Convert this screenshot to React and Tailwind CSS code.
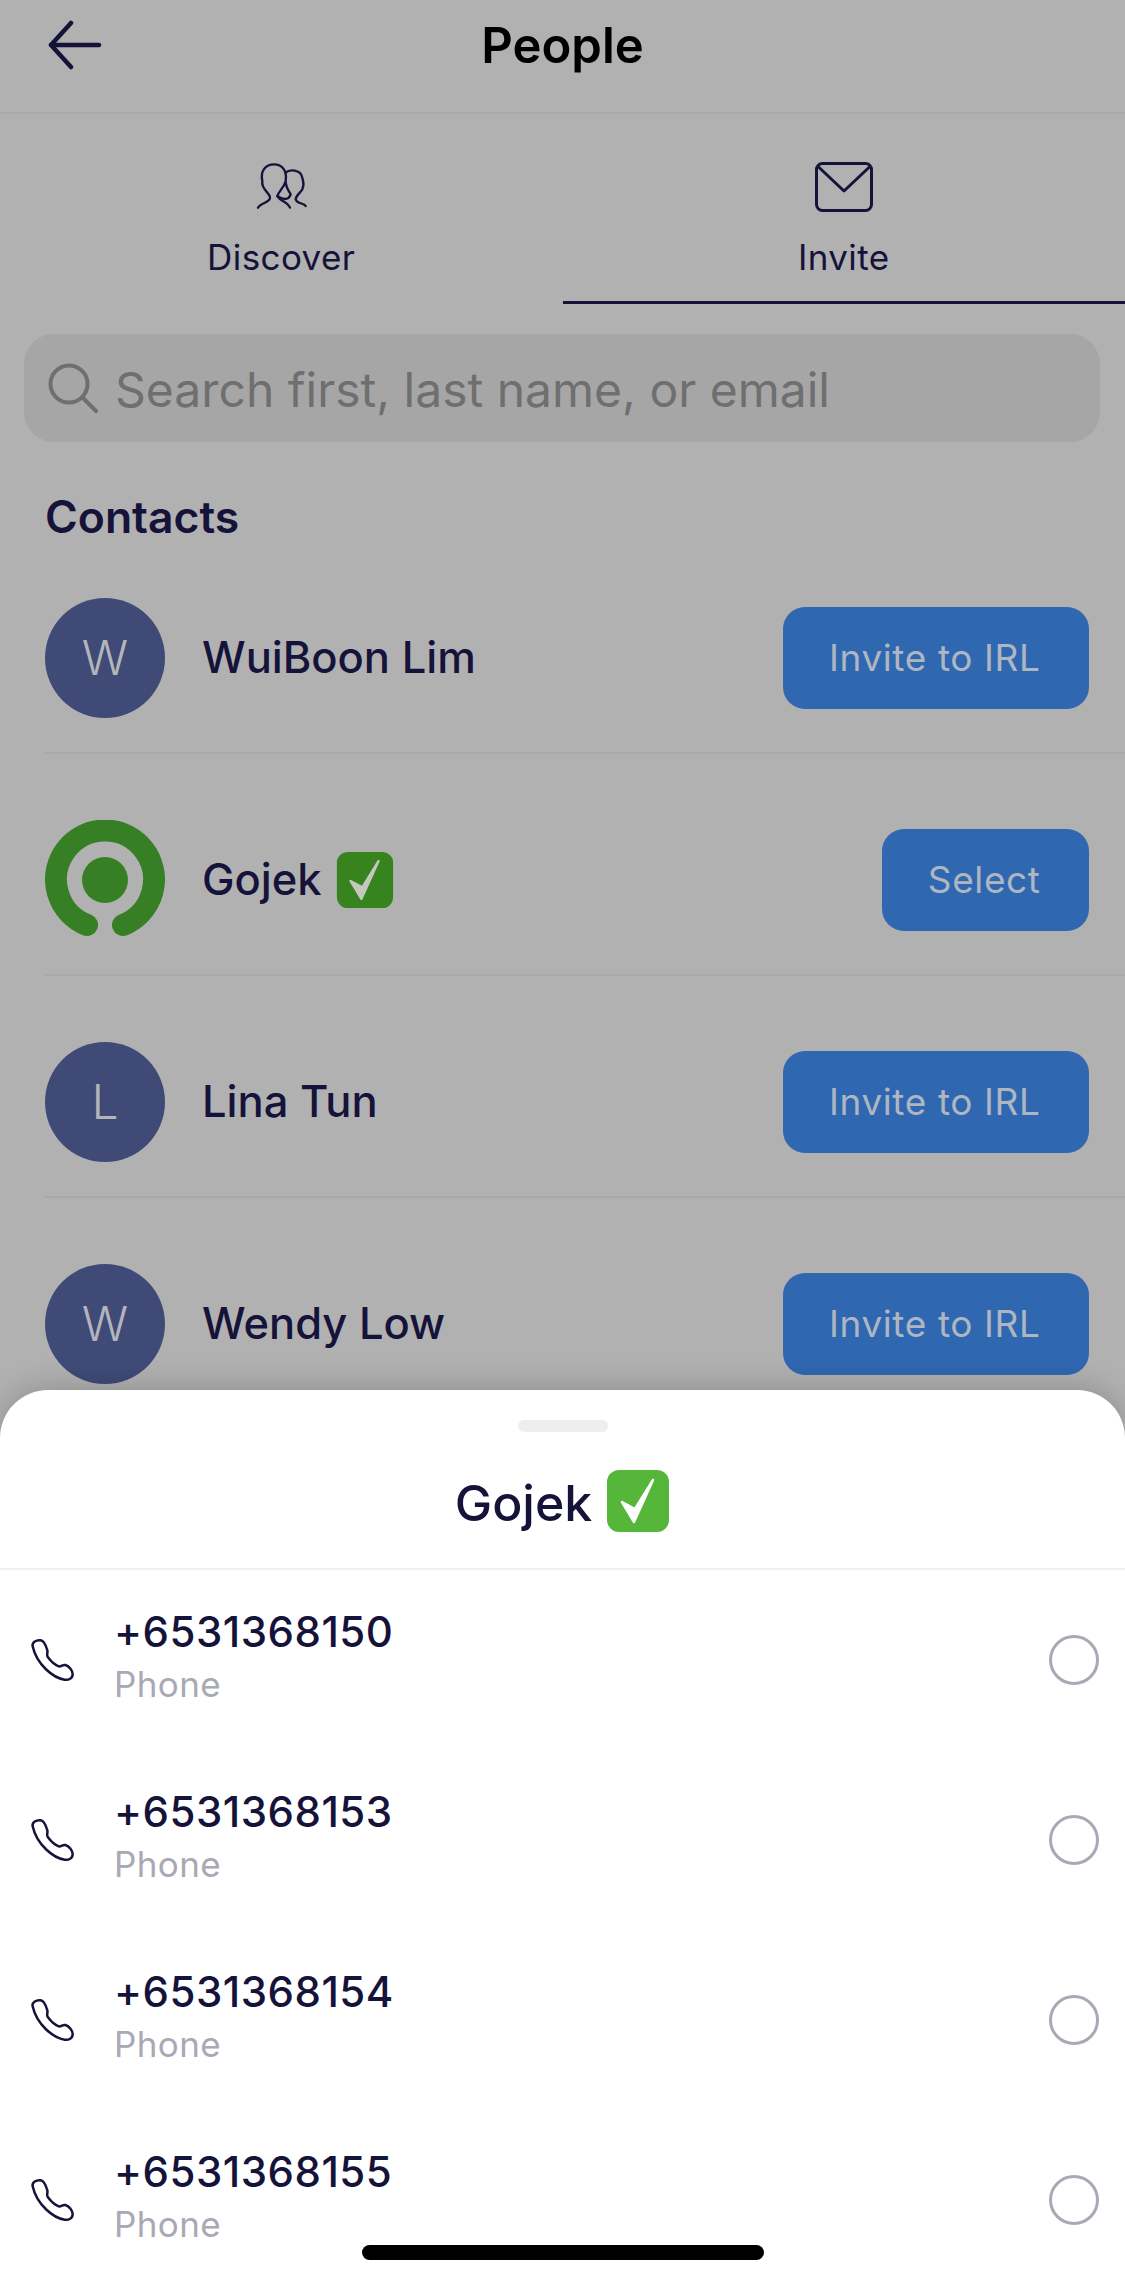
const INTER = "font-['Inter','Liberation_Sans',sans-serif]";

function CheckEmoji({ size, bg, tick, className = "" }) {
  return (
    <svg width={size} height={size} viewBox="0 0 64 64" className={className}>
      <rect x="1" y="1" width="62" height="62" rx="12" fill={bg} />
      <path d="M16 33 L28 53 L47 11 L29 40 Z" fill={tick} stroke={tick} strokeWidth="2.5" strokeLinejoin="round" />
    </svg>
  );
}

function Gojek() {
  return (
    <svg width="120" height="120" viewBox="0 0 120 120" className="shrink-0">
      <path d="M42 105 A49 49 0 1 1 78 105" fill="none" stroke="#367f24" strokeWidth="22" strokeLinecap="round" />
      <circle cx="60" cy="60" r="23" fill="#367f24" />
    </svg>
  );
}

function Avatar({ letter }) {
  return (
    <div className="w-[120px] h-[120px] shrink-0 rounded-full bg-[#3f4a77] flex items-center justify-center text-[#b4b5b9] text-[48px] font-light">
      {letter}
    </div>
  );
}

function ContactRow({ avatar, name, emoji, action, last }) {
  return (
    <div className={`flex items-center pr-[36px] ml-[45px] pb-[34px] ${last ? "" : "border-b-2 border-[#a9a9a9]"}`}>
      {avatar}
      <div className="ml-[37px] flex-1 flex items-center text-[43.5px] font-medium text-[#15133a]">
        <span>{name}</span>
        {emoji && <CheckEmoji size={58} bg="#37841f" tick="#c4c8c0" className="ml-[14px]" />}
      </div>
      <div className="h-[102px] pl-[46px] pr-[48.5px] rounded-[22px] bg-[#3067b1] flex items-center text-[37px] text-[#aeb6c2] tracking-[0.6px]">
        {action}
      </div>
    </div>
  );
}

function PhoneIcon() {
  return (
    <svg width="45" height="44" viewBox="30 55 135 132" className="shrink-0" fill="none" stroke="#15133a" strokeWidth="7.5" strokeLinejoin="round">
      <path d="M38 80 C35 68 50 60 62 62 C72 64 78 78 82 92 C84 102 78 106 84 113 C92 124 105 136 116 140 C124 142 128 134 136 136 C148 140 158 152 158 164 C158 176 146 182 134 180 C100 175 50 135 38 80 Z" />
    </svg>
  );
}

function PhoneRow({ number }) {
  return (
    <div className="h-[180px] flex items-center pl-[30px] pr-[26px]">
      <PhoneIcon />
      <div className="ml-[39px] flex-1 flex flex-col pb-[5px]">
        <span className="text-[42px] leading-[52px] font-medium text-[#15133a] tracking-[0.5px]">{number}</span>
        <span className="text-[35px] leading-[52px] text-[#a9a9b6] tracking-[0.4px]">Phone</span>
      </div>
      <div className="w-[50px] h-[50px] rounded-full border-[3.5px] border-[#a9a9b6]" />
    </div>
  );
}

export default function App() {
  return (
    <div className={`relative w-[1125px] h-[2284px] overflow-hidden bg-[#b1b1b1] ${INTER}`}>
      {/* Header */}
      <div className="relative h-[114px] border-b-2 border-[#a9a9a9] flex items-start justify-center pt-[15px]">
        <svg width="56" height="52" viewBox="0 0 56 52" className="absolute left-[47px] top-[20px]" fill="none" stroke="#15133a" strokeWidth="4.5" strokeLinecap="round" strokeLinejoin="round">
          <path d="M24 3 L4 25 L24 47" />
          <path d="M4 25 H52" />
        </svg>
        <span className="text-[49px] leading-[62px] font-semibold text-black">People</span>
      </div>

      {/* Tabs */}
      <div className="flex h-[190px]">
        <div className="w-1/2 flex flex-col items-center pt-[47px]">
          <svg width="55" height="50" viewBox="70 65 165 150" fill="none" stroke="#15133a" strokeWidth="7" strokeLinecap="round" strokeLinejoin="round">
            <path d="M82 205 C90 190 118 190 118 175 C118 160 90 150 95 125 C88 95 105 75 130 75 C155 75 170 95 165 125 C165 145 175 155 180 165 C175 180 160 185 140 170 C145 155 160 145 165 125" />
            <path d="M165 100 C175 90 210 88 215 115 C218 130 222 135 215 150 C205 165 195 170 195 180 C200 195 220 190 225 200" />
            <path d="M140 170 C145 185 170 185 178 205" />
          </svg>
          <span className="mt-[22px] text-[35px] leading-[48px] text-[#15133a] tracking-[0.4px]">Discover</span>
        </div>
        <div className="w-1/2 flex flex-col items-center pt-[48px] border-b-[3px] border-[#15133a]">
          <svg width="58" height="50" viewBox="0 0 58 50" fill="none" stroke="#15133a" strokeWidth="3" strokeLinejoin="round">
            <rect x="1.5" y="1.5" width="55" height="47" rx="6" />
            <path d="M2.5 4 L29 29 L55.5 4" />
          </svg>
          <span className="mt-[21px] text-[35px] leading-[48px] text-[#15133a] tracking-[0.4px]">Invite</span>
        </div>
      </div>

      {/* Search */}
      <div className="mx-[24px] mt-[30px] h-[108px] w-[1076px] rounded-[30px] bg-[#a6a6a6] flex items-center pl-[24px]">
        <svg width="50" height="50" viewBox="0 0 50 50" fill="none" stroke="#6f6f6f" strokeWidth="4" strokeLinecap="round">
          <circle cx="21" cy="21" r="18.5" />
          <path d="M35 35 L48 48" />
        </svg>
        <span className="ml-[17px] mt-[3px] text-[48px] text-[#6f6f6f]">Search first, last name, or email</span>
      </div>

      {/* Contacts */}
      <div className="ml-[45px] mt-[47px] text-[44.5px] leading-[56px] font-semibold text-[#15133a]">Contacts</div>

      <div className="mt-[53px] flex flex-col gap-[66px]">
        <ContactRow avatar={<Avatar letter="W" />} name="WuiBoon Lim" action="Invite to IRL" />
        <ContactRow avatar={<Gojek />} name="Gojek" emoji action="Select" />
        <ContactRow avatar={<Avatar letter="L" />} name="Lina Tun" action="Invite to IRL" />
        <ContactRow avatar={<Avatar letter="W" />} name="Wendy Low" action="Invite to IRL" last />
      </div>

      {/* Bottom sheet */}
      <div className="absolute left-0 right-0 bottom-0 h-[894px] bg-white rounded-t-[48px] shadow-[0_-4px_30px_rgba(0,0,0,0.18)]">
        <div className="mx-auto mt-[30px] w-[90px] h-[12px] rounded-full bg-[#eeeeee]" />
        <div className="h-[138px] flex items-center justify-center gap-[14px] border-b-2 border-[#f1f1f1]">
          <span className="mt-[6px] text-[50px] font-medium text-[#15133a]">Gojek</span>
          <CheckEmoji size={64} bg="#55b63a" tick="#ffffff" className="mt-[2px]" />
        </div>
        <div>
          <PhoneRow number="+6531368150" />
          <PhoneRow number="+6531368153" />
          <PhoneRow number="+6531368154" />
          <PhoneRow number="+6531368155" />
        </div>
        <div className="absolute left-[362px] bottom-[24px] w-[402px] h-[15px] rounded-full bg-black" />
      </div>
    </div>
  );
}
